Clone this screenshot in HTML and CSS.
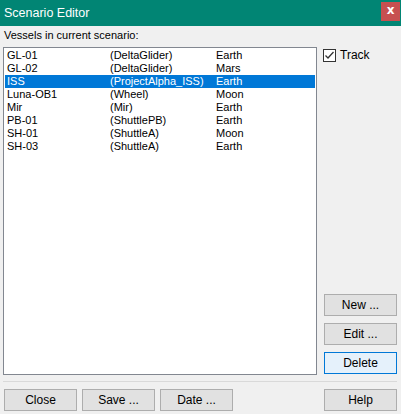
FILE: index.html
```html
<!DOCTYPE html>
<html>
<head>
<meta charset="utf-8">
<link rel="stylesheet" href="styles.css">
</head>
<body>
<div class="window">
  <div class="titlebar">
    <span class="title">Scenario Editor</span>
    <span class="close">x</span>
  </div>
  <div class="content">
    <div class="label">Vessels in current scenario:</div>
    <div class="main">
      <div class="list">
        <div class="row"><span class="c1">GL-01</span><span class="c2">(DeltaGlider)</span><span class="c3">Earth</span></div>
        <div class="row"><span class="c1">GL-02</span><span class="c2">(DeltaGlider)</span><span class="c3">Mars</span></div>
        <div class="row sel"><span class="c1">ISS</span><span class="c2">(ProjectAlpha_ISS)</span><span class="c3">Earth</span></div>
        <div class="row"><span class="c1">Luna-OB1</span><span class="c2">(Wheel)</span><span class="c3">Moon</span></div>
        <div class="row"><span class="c1">Mir</span><span class="c2">(Mir)</span><span class="c3">Earth</span></div>
        <div class="row"><span class="c1">PB-01</span><span class="c2">(ShuttlePB)</span><span class="c3">Earth</span></div>
        <div class="row"><span class="c1">SH-01</span><span class="c2">(ShuttleA)</span><span class="c3">Moon</span></div>
        <div class="row"><span class="c1">SH-03</span><span class="c2">(ShuttleA)</span><span class="c3">Earth</span></div>
      </div>
      <div class="side">
        <label class="check">
          <span class="box"><svg width="11" height="11" viewBox="0 0 11 11"><path d="M1.5 5.5 L4 8 L9.5 2" fill="none" stroke="#333" stroke-width="1.3"/></svg></span>
          <span>Track</span>
        </label>
        <div class="sidebtns">
          <div class="btn">New ...</div>
          <div class="btn">Edit ...</div>
          <div class="btn focus">Delete</div>
        </div>
      </div>
    </div>
    <div class="sep"></div>
    <div class="footer">
      <div class="btn">Close</div>
      <div class="btn">Save ...</div>
      <div class="btn">Date ...</div>
      <div class="spacer"></div>
      <div class="btn">Help</div>
    </div>
  </div>
</div>
</body>
</html>
```

FILE: styles.css
```css
html, body {
  margin: 0;
  padding: 0;
  background: #f0f0f0;
}
.window {
  width: 401px;
  height: 414px;
  background: #f0f0f0;
  font-family: "Liberation Sans", Arial, sans-serif;
  font-size: 11px;
  color: #000;
  overflow: hidden;
}
.titlebar {
  height: 26px;
  background: #018574;
  display: flex;
  align-items: center;
  justify-content: space-between;
  padding: 0 1px 0 4px;
  box-sizing: border-box;
}
.title {
  color: #fff;
  font-family: "Liberation Sans", Arial, sans-serif;
  font-size: 12.5px;
  margin-top: -1px;
}
.close {
  width: 19px;
  height: 19px;
  margin-top: -3px;
  background: #c75050;
  color: #fff;
  font-weight: bold;
  font-size: 12px;
  line-height: 17px;
  text-align: center;
  font-family: "DejaVu Sans", sans-serif;
}
.content {
  padding: 0 4px 0 3px;
}
.label {
  height: 21px;
  line-height: 18px;
  padding-left: 1px;
}
.main {
  display: flex;
  height: 328px;
}
.list {
  width: 314px;
  height: 328px;
  box-sizing: border-box;
  background: #fff;
  border: 1px solid #828790;
  padding: 1px;
}
.row {
  display: flex;
  height: 13px;
  line-height: 13px;
  padding-left: 2px;
  white-space: nowrap;
}
.row.sel {
  background: #0078d7;
  color: #fff;
}
.c1 { width: 103px; }
.c2 { width: 106px; }
.side {
  margin-left: 6px;
  width: 73px;
  display: flex;
  flex-direction: column;
  justify-content: space-between;
}
.check {
  display: flex;
  align-items: center;
  gap: 4px;
  margin-top: 1px;
  font-size: 12px;
}
.box {
  width: 13px;
  height: 13px;
  box-sizing: border-box;
  border: 1px solid #333;
  background: #fff;
  display: flex;
  align-items: center;
  justify-content: center;
}
.sidebtns {
  display: flex;
  flex-direction: column;
  gap: 7px;
  padding-left: 1px;
  margin-bottom: 1px;
}
.btn {
  width: 73px;
  height: 22px;
  box-sizing: border-box;
  background: #e1e1e1;
  border: 1px solid #adadad;
  text-align: center;
  line-height: 20px;
  font-size: 12px;
}
.btn.focus {
  background: #e5f1fb;
  border-color: #0078d7;
}
.sep {
  height: 1px;
  background: #d9d9d9;
  margin-top: 6px;
}
.footer {
  display: flex;
  gap: 5px;
  margin-top: 7px;
  padding-left: 1px;
}
.spacer { flex: 1; }
```
